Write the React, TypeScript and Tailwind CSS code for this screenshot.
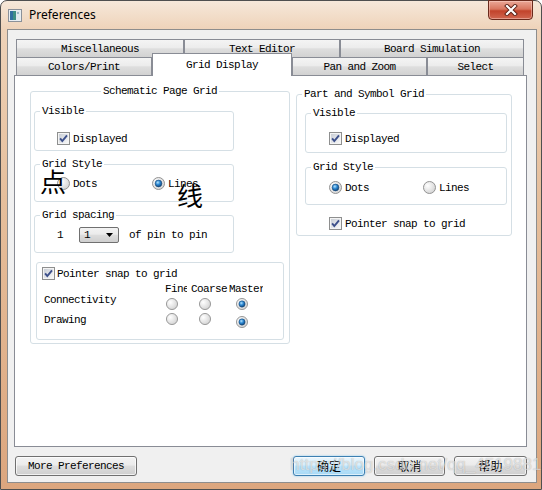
import React from 'react'

const mono = "font-['Liberation_Mono',monospace] text-[11px] leading-[12px] tracking-[-0.6px] text-black whitespace-nowrap"
const cjk = "font-['Noto_Sans_CJK_SC',sans-serif]"
const tabBg = 'bg-[linear-gradient(#f4f4f4,#ececec_45%,#dedede_52%,#d2d2d2)]'
const btnBg = 'bg-[linear-gradient(#f3f3f3,#ebebeb_45%,#dddddd_50%,#cfcfcf)]'

function Check() {
  return (
    <svg width="13" height="13" viewBox="0 0 13 13" className="shrink-0">
      <defs>
        <linearGradient id="cbg" x1="0" y1="0" x2="1" y2="1">
          <stop offset="0" stopColor="#c9ced6" />
          <stop offset="1" stopColor="#f8f8f8" />
        </linearGradient>
      </defs>
      <rect x="0.5" y="0.5" width="12" height="12" fill="#f4f4f4" stroke="#8e8f8f" />
      <rect x="2" y="2" width="9" height="9" fill="url(#cbg)" />
      <path d="M3.1 6.3 L5.3 9 L10 3.3" fill="none" stroke="#3c4f8a" strokeWidth="1.9" />
    </svg>
  )
}

function Radio({ on, size = 13 }: { on?: boolean; size?: number }) {
  return (
    <svg width={size} height={size} viewBox="0 0 13 13" className="shrink-0">
      <defs>
        <radialGradient id="rbg" cx="0.35" cy="0.35" r="0.75">
          <stop offset="0" stopColor="#ffffff" />
          <stop offset="1" stopColor="#d0d0d0" />
        </radialGradient>
        <radialGradient id="rdot" cx="0.4" cy="0.35" r="0.7">
          <stop offset="0" stopColor="#b4e3fc" />
          <stop offset="0.45" stopColor="#2d89d4" />
          <stop offset="1" stopColor="#0b3a6c" />
        </radialGradient>
      </defs>
      <circle cx="6.5" cy="6.5" r="6" fill="url(#rbg)" stroke="#939393" />
      {on && <circle cx="6.5" cy="6.5" r="3.4" fill="url(#rdot)" stroke="#1b4a78" strokeWidth="0.6" />}
    </svg>
  )
}

function Tab({ label, className }: { label: string; className: string }) {
  return (
    <div className={`h-[18px] border border-b-0 border-[#898c95] ${tabBg} flex items-center justify-center ${mono} ${className}`}>
      {label}
    </div>
  )
}

function Btn({ children, className = '' }: { children: React.ReactNode; className?: string }) {
  return (
    <div className={`h-[20px] border border-[#707070] rounded-[3px] ${btnBg} flex items-center justify-center shadow-[inset_0_0_0_1px_rgba(255,255,255,0.7)] ${className}`}>
      {children}
    </div>
  )
}

export default function App() {
  return (
    <div className="relative w-[542px] h-[490px] overflow-hidden bg-white">
      <div className="w-[542px] h-[490px] rounded-t-[7px] border border-[#4f4f4f] bg-[linear-gradient(#f6e8da,#eed2b8_6%,#e6bf9c_40%,#dca67e)] flex flex-col">
        {/* title bar */}
        <div className="h-[28px] flex items-center pl-[7px] shrink-0">
          <svg width="14" height="13" viewBox="0 0 14 13">
            <rect x="0.5" y="0.5" width="13" height="12" fill="#e9eef2" stroke="#8b9199" />
            <rect x="2" y="2" width="6" height="9" fill="#3d8f86" />
            <rect x="2" y="2" width="3" height="9" fill="#2f6fa0" />
            <rect x="8" y="2" width="4" height="9" fill="#dfe9ee" />
            <rect x="9" y="3" width="2" height="2" fill="#9bb7c8" />
          </svg>
          <span className="ml-[7px] font-['Noto_Sans',sans-serif] text-[12px] leading-none text-black">Preferences</span>
          <div className="ml-auto mr-[8px] self-start -mt-px w-[45px] h-[20px] rounded-b-[4px] border border-[#6a2a1c] bg-[linear-gradient(#eba897,#d8765f_45%,#c2432b_55%,#d06650)] flex items-center justify-center shadow-[inset_0_0_0_1px_rgba(255,220,210,0.45)]">
            <svg width="14" height="12" viewBox="0 0 14 12">
              <path d="M3 2 L11 10 M11 2 L3 10" stroke="#5a1f14" strokeWidth="4" strokeLinecap="square" />
              <path d="M3 2 L11 10 M11 2 L3 10" stroke="#ffffff" strokeWidth="2.2" strokeLinecap="square" />
            </svg>
          </div>
        </div>

        {/* client */}
        <div className="ml-[6px] w-[530px] h-[454px] border border-[#8d8d8d] bg-[#f0f0f0] pt-[9px]">
          <div className="ml-[8px] flex">
            <Tab label="Miscellaneous" className="w-[168px]" />
            <Tab label="Text Editor" className="w-[156px]" />
            <Tab label="Board Simulation" className="w-[184px]" />
          </div>
          <div className="ml-[8px] flex items-end h-[18px]">
            <Tab label="Colors/Print" className="w-[136px]" />
            <div className={`relative z-10 w-[140px] h-[23px] -mb-px border border-b-0 border-[#898c95] bg-white flex justify-center pt-[5px] ${mono}`}>
              Grid Display
            </div>
            <Tab label="Pan and Zoom" className="w-[135px]" />
            <Tab label="Select" className="w-[97px]" />
          </div>

          {/* panel */}
          <div className="ml-[6px] w-[513px] h-[372px] border border-[#898c95] bg-white pt-[9px] pl-[15px] flex items-start">
            <fieldset className="w-[260px] border border-[#d5dfe5] rounded-[3px] pb-[3px]">
              <legend className={`${mono} mx-auto px-[2px]`}>Schematic Page Grid</legend>
              <div className="pl-[3px] pt-[8px]">
                <fieldset className="w-[200px] border border-[#d5dfe5] rounded-[3px]">
                  <legend className={`${mono} ml-[5px] px-[2px]`}>Visible</legend>
                  <div className="pl-[22px] pt-[15px] pb-[5px] flex items-center gap-[3px]">
                    <Check />
                    <span className={mono}>Displayed</span>
                  </div>
                </fieldset>

                <fieldset className="mt-[7px] w-[200px] border border-[#d5dfe5] rounded-[3px]">
                  <legend className={`${mono} ml-[5px] px-[2px]`}>Grid Style</legend>
                  <div className="pl-[22px] pt-[7px] pb-[11px] flex items-center">
                    <div className="w-[95px] flex items-center gap-[3px]">
                      <Radio />
                      <span className={mono}>Dots</span>
                    </div>
                    <div className="flex items-center gap-[3px]">
                      <Radio on />
                      <span className={mono}>Lines</span>
                    </div>
                  </div>
                </fieldset>

                <fieldset className="mt-[7px] w-[200px] border border-[#d5dfe5] rounded-[3px]">
                  <legend className={`${mono} ml-[5px] px-[2px]`}>Grid spacing</legend>
                  <div className="pl-[22px] pt-[6px] pb-[9px] flex items-center">
                    <span className={`${mono} w-[22px]`}>1</span>
                    <div className={`w-[40px] h-[16px] border border-[#707070] rounded-[2px] ${btnBg} flex items-center pl-[4px] pr-[5px]`}>
                      <span className={mono}>1</span>
                      <svg className="ml-auto" width="7" height="4" viewBox="0 0 7 4">
                        <path d="M0 0 H7 L3.5 4 Z" fill="#000" />
                      </svg>
                    </div>
                    <span className={`${mono} ml-[10px]`}>of pin to pin</span>
                  </div>
                </fieldset>

                <div className="mt-[9px] ml-[2px] w-[248px] h-[78px] border border-[#d5dfe5] rounded-[3px] pt-[4px] pl-[5px]">
                  <div className="flex items-center gap-[2px]">
                    <Check />
                    <span className={mono}>Pointer snap to grid</span>
                  </div>
                  <div className="mt-[3px] ml-[123px] flex h-[12px]">
                    <span className={`${mono} w-[22px] overflow-hidden`}>Fine</span>
                    <span className={`${mono} ml-[4px] w-[36px]`}>Coarse</span>
                    <span className={`${mono} ml-[2px] w-[34px] overflow-hidden`}>Master</span>
                  </div>
                  <div className="-mt-px pl-[2px] flex items-start">
                    <span className={`${mono} w-[122px]`}>Connectivity</span>
                    <div className="mt-[4px] flex">
                      <Radio size={12} />
                      <div className="ml-[21px]"><Radio size={12} /></div>
                      <div className="ml-[25px]"><Radio size={12} on /></div>
                    </div>
                  </div>
                  <div className="mt-[4px] pl-[2px] flex items-start">
                    <span className={`${mono} w-[122px]`}>Drawing</span>
                    <div className="-mt-px flex items-start">
                      <Radio size={12} />
                      <div className="ml-[21px]"><Radio size={12} /></div>
                      <div className="ml-[25px] mt-[3px]"><Radio size={12} on /></div>
                    </div>
                  </div>
                </div>
              </div>
            </fieldset>

            <fieldset className="mt-[3px] ml-[6px] w-[216px] border border-[#d5dfe5] rounded-[3px]">
              <legend className={`${mono} ml-[5px] px-[2px]`}>Part and Symbol Grid</legend>
              <div className="pl-[8px] pt-[7px] pb-[5px]">
                <fieldset className="w-[202px] border border-[#d5dfe5] rounded-[3px]">
                  <legend className={`${mono} ml-[5px] px-[2px]`}>Visible</legend>
                  <div className="pl-[23px] pt-[13px] pb-[7px] flex items-center gap-[3px]">
                    <Check />
                    <span className={mono}>Displayed</span>
                  </div>
                </fieldset>
                <fieldset className="mt-[8px] w-[202px] border border-[#d5dfe5] rounded-[3px]">
                  <legend className={`${mono} ml-[5px] px-[2px]`}>Grid Style</legend>
                  <div className="pl-[23px] pt-[8px] pb-[10px] flex items-center">
                    <div className="w-[94px] flex items-center gap-[3px]">
                      <Radio on />
                      <span className={mono}>Dots</span>
                    </div>
                    <div className="flex items-center gap-[3px]">
                      <Radio />
                      <span className={mono}>Lines</span>
                    </div>
                  </div>
                </fieldset>
                <div className="mt-[12px] ml-[24px] flex items-center gap-[3px]">
                  <Check />
                  <span className={mono}>Pointer snap to grid</span>
                </div>
              </div>
            </fieldset>
          </div>

          {/* buttons */}
          <div className="mt-[9px] ml-[7px] flex">
            <Btn className="w-[122px]"><span className={mono}>More Preferences</span></Btn>
            <div className="ml-[156px] w-[72px] h-[20px] border border-[#3c7fb1] rounded-[3px] bg-[linear-gradient(#eaf6fd,#d9f0fc_45%,#bee6fd_50%,#a7d9f5)] shadow-[inset_0_0_0_1px_rgba(255,255,255,0.6),0_0_2px_#7fc4ef] flex items-center justify-center">
              <span className={`${cjk} text-[12px] leading-none text-black`}>确定</span>
            </div>
            <Btn className="ml-[9px] w-[71px]"><span className={`${cjk} text-[12px] leading-none text-black`}>取消</span></Btn>
            <Btn className="ml-[9px] w-[73px]"><span className={`${cjk} text-[12px] leading-none text-black`}>帮助</span></Btn>
          </div>
        </div>
      </div>

      {/* handwritten annotations */}
      <span className={`absolute left-[40px] top-[168px] ${cjk} text-[26px] leading-none text-black`}>点</span>
      <span className={`absolute left-[177px] top-[182px] ${cjk} text-[26px] leading-none text-black`}>线</span>

      {/* watermark */}
      <span className="absolute left-[290px] top-[455px] font-['Liberation_Sans',sans-serif] text-[17px] leading-[20px] text-white/60 [text-shadow:0_0_1px_rgba(0,0,0,0.3)] whitespace-nowrap">
        https://blog.csdn.net/qq_45198815
      </span>
    </div>
  )
}
